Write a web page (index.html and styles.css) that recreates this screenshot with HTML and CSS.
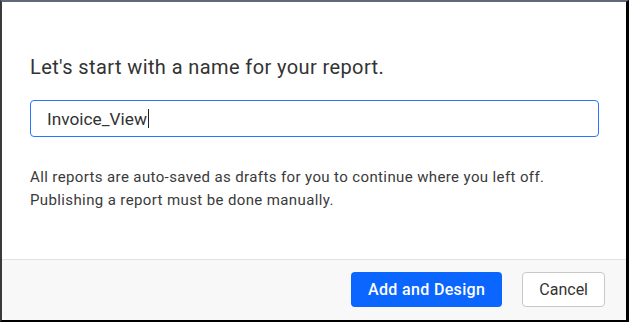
FILE: index.html
```html
<!DOCTYPE html>
<html lang="en">
<head>
    <meta charset="UTF-8">
    <meta name="viewport" content="width=device-width, initial-scale=1.0">
    <title>New Report</title>
    <link rel="stylesheet" href="styles.css">
</head>
<body>

    <!-- Dialog -->
    <div class="frame">
        <div class="dialog">
            <div class="dialog-body">
                <h2 class="title">Let's start with a name for your report.</h2>

                <div class="name-box">
                    <span class="name-text">Invoice_View</span><span class="caret"></span>
                </div>

                <p class="note">All reports are auto-saved as drafts for you to continue where you left off.<br>Publishing a report must be done manually.</p>
            </div>

            <!-- Footer buttons -->
            <div class="dialog-footer">
                <button class="btn-primary">Add and Design</button>
                <button class="btn-cancel">Cancel</button>
            </div>
        </div>
    </div>

</body>
</html>
```

FILE: styles.css
```css
* {
    box-sizing: border-box;
}

body {
    margin: 0;
    padding: 0;
    background-color: #111;
    font-family: Roboto, "Liberation Sans", Arial, sans-serif;
    color: #333;
}

.frame {
    width: 629px;
    height: 322px;
    border-top: 2px solid #62677a;
    border-left: 2px solid #3a3a3a;
    border-right: 3px solid #000;
    border-bottom: 2px solid #000;
    background-color: #fff;
}

.dialog {
    height: 100%;
    display: flex;
    flex-direction: column;
    background-color: #fff;
}

.dialog-body {
    flex: 1;
    padding: 53px 27px 0 28px;
}

/* Title */
.title {
    margin: 0;
    font-size: 20px;
    font-weight: 400;
    line-height: 24px;
    letter-spacing: 0.4px;
    color: #333;
}

/* Name input */
.name-box {
    margin-top: 21px;
    height: 37px;
    border: 1px solid #2a75ff;
    border-radius: 4px;
    padding: 0 16px;
    display: flex;
    align-items: center;
    font-size: 17.3px;
    color: #333;
}

.caret {
    display: inline-block;
    width: 1px;
    height: 19px;
    margin-left: 1px;
    background-color: #222;
}

/* Info text */
.note {
    margin: 29px 0 0 0;
    font-size: 15px;
    line-height: 23px;
    letter-spacing: 0.38px;
    color: #3a3a3a;
}

/* Footer */
.dialog-footer {
    height: 61px;
    display: flex;
    justify-content: flex-end;
    align-items: flex-start;
    gap: 20px;
    padding: 12px 21px 0 0;
    background-color: #f8f8f8;
    border-top: 1px solid #e2e2e2;
    border-radius: 0 0 4px 4px;
}

.btn-primary {
    height: 35px;
    padding: 0 17px;
    border: none;
    border-radius: 4px;
    background-color: #0a66ff;
    color: #fff;
    font-family: inherit;
    font-size: 16px;
    font-weight: 500;
    letter-spacing: 0.35px;
    cursor: pointer;
}

.btn-cancel {
    height: 35px;
    padding: 0 16px;
    border: 1px solid #c8c8c8;
    border-radius: 4px;
    background-color: #fff;
    color: #333;
    font-family: inherit;
    font-size: 16px;
    font-weight: 400;
    cursor: pointer;
}
```
